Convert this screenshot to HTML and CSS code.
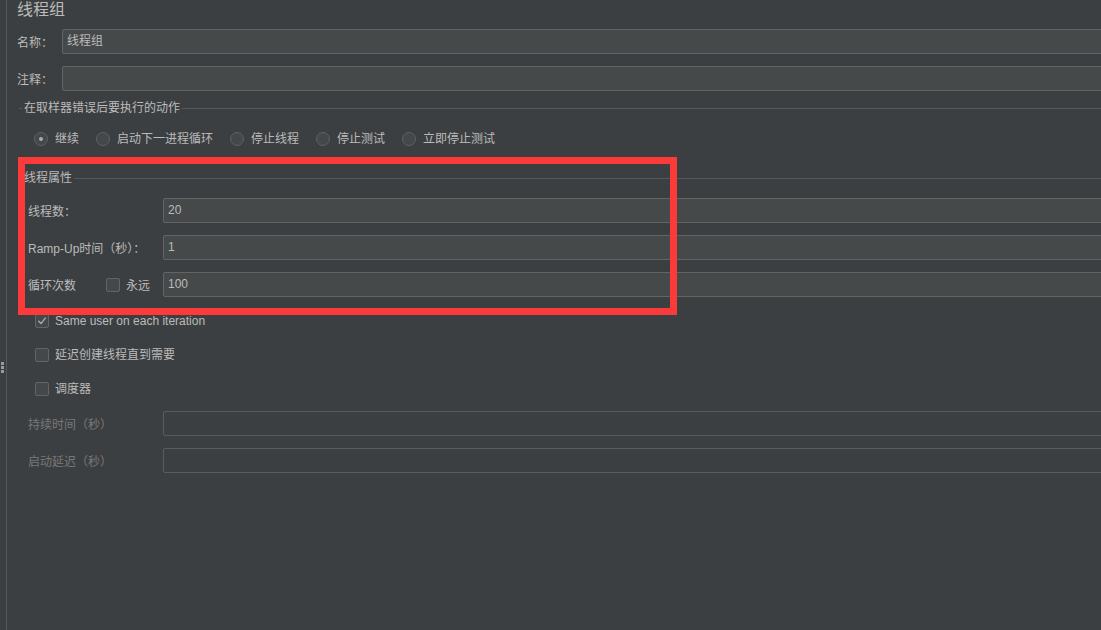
FILE: index.html
```html
<!DOCTYPE html>
<html lang="zh">
<head>
<meta charset="utf-8">
<title>线程组</title>
<link rel="stylesheet" href="styles.css">
</head>
<body>
<div class="app">
  <div class="gutter">
    <div class="grip"><i></i><i></i><i></i></div>
  </div>
  <div class="content">
    <div class="title">线程组</div>

    <div class="row first">
      <span class="lbl">名称：</span>
      <div class="field">线程组</div>
    </div>
    <div class="row">
      <span class="lbl">注释：</span>
      <div class="field"></div>
    </div>

    <div class="group-title g1">
      <span class="line short"></span>
      <span class="legend">在取样器错误后要执行的动作</span>
      <span class="line"></span>
    </div>

    <div class="radios">
      <span class="radio-item"><span class="radio on"></span>继续</span>
      <span class="radio-item"><span class="radio"></span>启动下一进程循环</span>
      <span class="radio-item"><span class="radio"></span>停止线程</span>
      <span class="radio-item"><span class="radio"></span>停止测试</span>
      <span class="radio-item"><span class="radio"></span>立即停止测试</span>
    </div>

    <div class="group-title g2">
      <span class="line short"></span>
      <span class="legend">线程属性</span>
      <span class="line"></span>
    </div>

    <div class="prop-row p1">
      <span class="plabel">线程数：</span>
      <div class="field">20</div>
    </div>
    <div class="prop-row">
      <span class="plabel">Ramp-Up时间（秒）：</span>
      <div class="field">1</div>
    </div>
    <div class="prop-row">
      <span class="plabel loop">
        <span class="loop-name">循环次数</span>
        <span class="check"></span>
        <span class="forever">永远</span>
      </span>
      <div class="field">100</div>
    </div>

    <div class="check-row c1">
      <span class="check on">
        <svg viewBox="0 0 14 14" width="14" height="14"><path d="M3.2 7.4 L5.8 10 L10.8 3.6" fill="none" stroke="#a9a9a9" stroke-width="1.6" stroke-linecap="round" stroke-linejoin="round"/></svg>
      </span>
      <span class="ctext">Same user on each iteration</span>
    </div>
    <div class="check-row">
      <span class="check"></span>
      <span class="ctext">延迟创建线程直到需要</span>
    </div>
    <div class="check-row">
      <span class="check"></span>
      <span class="ctext">调度器</span>
    </div>

    <div class="prop-row disabled d1">
      <span class="plabel">持续时间（秒）</span>
      <div class="field"></div>
    </div>
    <div class="prop-row disabled">
      <span class="plabel">启动延迟（秒）</span>
      <div class="field"></div>
    </div>
  </div>
</div>
<div class="highlight"></div>
</body>
</html>
```

FILE: styles.css
```css
html, body {
  margin: 0;
  padding: 0;
  width: 1101px;
  height: 630px;
  overflow: hidden;
  background: #3c3f41;
}

body {
  position: relative;
  font-family: "Liberation Sans", "Noto Sans CJK SC", sans-serif;
  font-size: 12px;
  color: #bbbbbb;
}

.app {
  display: flex;
  height: 630px;
}

.gutter {
  width: 7px;
  flex: none;
  border-right: 1px solid #555759;
  display: flex;
  flex-direction: column;
  padding-top: 362px;
  box-sizing: border-box;
}

.grip {
  display: flex;
  flex-direction: column;
  gap: 1px;
  padding-left: 1px;
}

.grip i {
  display: block;
  width: 3px;
  height: 3px;
  background: #9a9a9a;
}

.content {
  flex: 1;
  padding-left: 10px;
  margin-right: -30px;
  display: flex;
  flex-direction: column;
}

.title {
  font-size: 16px;
  line-height: 17px;
  height: 16px;
  font-family: "Noto Sans CJK SC", sans-serif;
}

.row {
  display: flex;
  align-items: center;
  height: 25px;
  margin-top: 12px;
}

.row.first {
  margin-top: 13px;
}

.row .lbl {
  width: 45px;
  flex: none;
}

.field {
  flex: 1;
  height: 25px;
  box-sizing: border-box;
  background: #45494a;
  border: 1px solid #646464;
  border-radius: 2px;
  padding-left: 4px;
  line-height: 23px;
  color: #bbbbbb;
}

.group-title {
  display: flex;
  align-items: center;
  height: 14px;
  line-height: 14px;
  padding-left: 2px;
}

.group-title .line {
  flex: 1;
  height: 1px;
  background: #555759;
}

.group-title .line.short {
  flex: none;
  width: 3px;
}

.group-title .legend {
  padding: 0 2px;
}

.g1 {
  margin-top: 10px;
}

.g2 {
  margin-top: 25px;
}

.radios {
  display: flex;
  align-items: center;
  gap: 17px;
  height: 14px;
  margin-top: 17px;
  padding-left: 17px;
}

.radio-item {
  display: flex;
  align-items: center;
  line-height: 14px;
}

.radio {
  width: 14px;
  height: 14px;
  box-sizing: border-box;
  border: 1px solid #5e6163;
  border-radius: 50%;
  background: #43494a;
  margin-right: 7px;
  display: flex;
  align-items: center;
  justify-content: center;
}

.radio.on::after {
  content: "";
  width: 4px;
  height: 4px;
  border-radius: 50%;
  background: #a9a9a9;
}

.prop-row {
  display: flex;
  align-items: center;
  height: 25px;
  margin-top: 12px;
  padding-left: 11px;
}

.prop-row.p1 {
  margin-top: 13px;
}

.plabel {
  width: 135px;
  flex: none;
  display: flex;
  align-items: center;
}

.loop-name {
  width: 78px;
}

.check {
  width: 14px;
  height: 14px;
  box-sizing: border-box;
  border: 1px solid #646464;
  border-radius: 2px;
  background: #43494a;
  display: flex;
  align-items: center;
  justify-content: center;
  flex: none;
}

.check svg {
  display: block;
}

.forever {
  margin-left: 6px;
}

.check-row {
  display: flex;
  align-items: center;
  height: 14px;
  margin-top: 20px;
  padding-left: 18px;
}

.check-row.c1 {
  margin-top: 17px;
}

.ctext {
  margin-left: 6px;
  line-height: 14px;
}

.prop-row.disabled {
  color: #787878;
}

.prop-row.disabled .field {
  background: transparent;
  border-color: #595b5d;
}

.prop-row.d1 {
  margin-top: 15px;
}

.highlight {
  position: absolute;
  left: 18px;
  top: 157px;
  width: 659px;
  height: 158px;
  box-sizing: border-box;
  border: 7px solid #fd3a3a;
  pointer-events: none;
}
```
